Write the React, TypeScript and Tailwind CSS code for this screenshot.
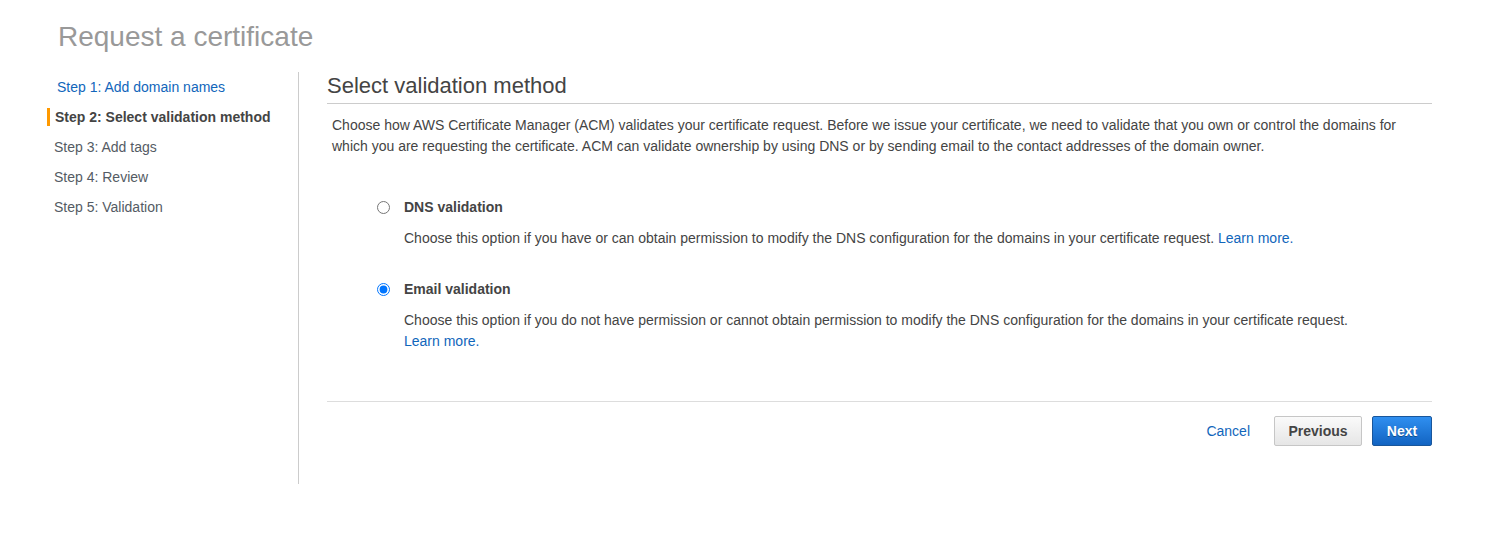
import React, { useState } from "react";

const steps = [
  { label: "Step 1: Add domain names", state: "done" },
  { label: "Step 2: Select validation method", state: "active" },
  { label: "Step 3: Add tags", state: "todo" },
  { label: "Step 4: Review", state: "todo" },
  { label: "Step 5: Validation", state: "todo" },
];

function StepNav() {
  return (
    <nav className="w-[252px] shrink-0 border-r border-[#cccccc]">
      {steps.map((s) => {
        if (s.state === "active") {
          return (
            <div key={s.label} className="flex h-[30px] items-center">
              <span className="flex h-[18px] items-center border-l-[3px] border-[#ff9900] pl-[5px] text-[14px] font-bold text-[#444]">
                {s.label}
              </span>
            </div>
          );
        }
        return (
          <div
            key={s.label}
            className={
              s.state === "done"
                ? "flex h-[30px] items-center pl-[10px] text-[14px] text-[#1166bb]"
                : "flex h-[30px] items-center pl-[7px] text-[14px] text-[#545b64]"
            }
          >
            {s.label}
          </div>
        );
      })}
    </nav>
  );
}

interface OptionProps {
  title: string;
  checked: boolean;
  onSelect: () => void;
  children: React.ReactNode;
}

function Option({ title, checked, onSelect, children }: OptionProps) {
  return (
    <div className="pl-[50px]">
      <label className="flex h-[20px] cursor-pointer items-center">
        <input
          type="radio"
          name="validation"
          checked={checked}
          onChange={onSelect}
          className="m-0 h-[13px] w-[13px]"
        />
        <span className="ml-[14px] text-[14px] font-bold text-[#444]">{title}</span>
      </label>
      <p className="mt-[11px] pl-[27px] text-[14px] leading-[21px] text-[#444]">{children}</p>
    </div>
  );
}

export default function App() {
  const [method, setMethod] = useState<"dns" | "email">("email");

  return (
    <div className="min-h-[534px] bg-white font-['Liberation_Sans',Arial,sans-serif] text-[#444]">
      <h1 className="pl-[58px] pt-[20px] text-[28px] leading-[34px] text-[#999999]">
        Request a certificate
      </h1>

      <div className="mt-[18px] flex pl-[47px] pr-[54px]">
        <StepNav />

        <main className="flex-1 pb-[38px] pl-[28px]">
          <h2 className="box-border h-[32px] border-b border-[#cccccc] pt-[2px] text-[22px] leading-[24px] text-[#444]">
            Select validation method
          </h2>

          <p className="mt-[11px] pl-[5px] text-[14px] leading-[21px] text-[#444]">
            Choose how AWS Certificate Manager (ACM) validates your certificate request. Before we issue
            your certificate, we need to validate that you own or control the domains for which you are
            requesting the certificate. ACM can validate ownership by using DNS or by sending email to the
            contact addresses of the domain owner.
          </p>

          <div className="mt-[40px]">
            <Option title="DNS validation" checked={method === "dns"} onSelect={() => setMethod("dns")}>
              Choose this option if you have or can obtain permission to modify the DNS configuration for the
              domains in your certificate request.{" "}
              <a href="#" className="text-[#1166bb]">
                Learn more.
              </a>
            </Option>
          </div>

          <div className="mt-[30px]">
            <Option title="Email validation" checked={method === "email"} onSelect={() => setMethod("email")}>
              Choose this option if you do not have permission or cannot obtain permission to modify the DNS
              configuration for the domains in your certificate request.
              <br />
              <a href="#" className="text-[#1166bb]">
                Learn more.
              </a>
            </Option>
          </div>

          <div className="mt-[49px] border-t border-[#dddddd]" />

          <div className="mt-[14px] flex items-center justify-end">
            <a href="#" className="text-[14px] text-[#1166bb]">
              Cancel
            </a>
            <button className="ml-[24px] h-[30px] w-[88px] rounded-[2px] border border-[#c6c6c6] bg-gradient-to-b from-[#fafafa] to-[#e6e6e6] text-[14px] font-bold text-[#444]">
              Previous
            </button>
            <button className="ml-[10px] h-[30px] w-[60px] rounded-[2px] border border-[#19569b] bg-gradient-to-b from-[#2f8ff0] to-[#1264c2] text-[14px] font-bold text-white [text-shadow:0_1px_0_rgba(0,0,0,0.35)]">
              Next
            </button>
          </div>
        </main>
      </div>
    </div>
  );
}
